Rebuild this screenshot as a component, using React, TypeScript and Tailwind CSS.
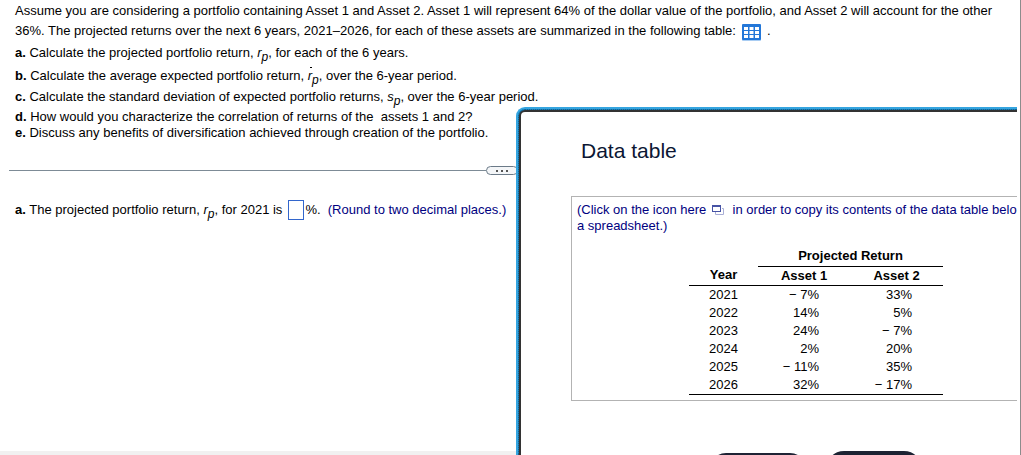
import type { ReactNode } from "react";

const rows = [
  { year: 2021, first: "− 7%", second: "33%" },
  { year: 2022, first: "14%", second: "5%" },
  { year: 2023, first: "24%", second: "− 7%" },
  { year: 2024, first: "2%", second: "20%" },
  { year: 2025, first: "− 11%", second: "35%" },
  { year: 2026, first: "32%", second: "− 17%" },
];

function Variable({ name, mean = false }: { name: string; mean?: boolean }) {
  return (
    <span className="relative italic">
      {name}
      <span className="relative top-1 text-[12px] leading-none">p</span>
      {mean && <span aria-hidden="true" className="absolute top-[-1px] left-[2px] h-px w-[2px] bg-black" />}
    </span>
  );
}

function Part({ letter, children }: { letter: string; children: ReactNode }) {
  return (
    <>
      <b>{letter}.</b> {children}
    </>
  );
}

function TableIcon() {
  return (
    <svg width="19" height="17" viewBox="0 0 19 17" aria-hidden="true">
      <rect y="1" width="19" height="16" rx="1" fill="#a9cdf3" />
      <rect width="19" height="16" rx="1" fill="#2377d8" />
      <path
        d="M2 3h4v3H2zM7.500 3h4v3h-4zM13 3h4v3h-4zM2 7h4v3H2zM7.500 7h4v3h-4zM13 7h4v3h-4zM2 11h4v3H2zM7.500 11h4v3h-4zM13 11h4v3h-4z"
        fill="#fff"
      />
    </svg>
  );
}

function CopyIcon() {
  return (
    <svg width="12" height="10" viewBox="0 0 12 10" aria-hidden="true">
      <path d="M10 3.500h1.500v6h-8V7" fill="none" stroke="#a9aed6" />
      <rect x=".5" y=".5" width="8" height="6" fill="#fff" stroke="#4753a5" />
      <path d="M0 1h9" stroke="#4753a5" strokeWidth="2" />
    </svg>
  );
}

function ReturnsTable() {
  return (
    <table className="mt-3 ml-[112px] w-[254px] table-fixed border-collapse leading-[18px]">
      <colgroup>
        <col className="w-[69px]" />
        <col className="w-[92px]" />
        <col className="w-[93px]" />
      </colgroup>
      <thead>
        <tr className="h-5">
          <td className="p-0" />
          <th colSpan={2} scope="colgroup" className="border-b border-black p-0 text-center">
            Projected Return
          </th>
        </tr>
        <tr className="border-b border-black">
          <th scope="col" className="p-0 text-center">Year</th>
          <th scope="col" className="p-0 text-center">Asset 1</th>
          <th scope="col" className="p-0 text-center">Asset 2</th>
        </tr>
      </thead>
      <tbody className="border-b border-black">
        {rows.map((row) => (
          <tr key={row.year}>
            <td className="p-0 text-center">{row.year}</td>
            <td className="p-0 pr-[31px] text-right whitespace-nowrap">{row.first}</td>
            <td className="p-0 pr-[31px] text-right whitespace-nowrap">{row.second}</td>
          </tr>
        ))}
      </tbody>
    </table>
  );
}

function DataDialog() {
  return (
    <section
      role="dialog"
      aria-labelledby="dialog-title"
      className="absolute top-[107px] right-0 bottom-0 left-[516px] overflow-hidden rounded-tl-[9px] border-t-2 border-l-2 border-[#35a5e0] bg-[#0f84c4]"
    >
      <div className="h-full rounded-tl-[7px] border-t border-l border-dotted border-[#1d5f86]">
        <div className="flex h-full flex-col rounded-tl-[6px] border-t-2 border-l-2 border-[#333] bg-white pl-[50px]">
          <h2 id="dialog-title" className="pt-[25px] pl-[10px] text-[21px] leading-7 text-[#0b1633]">
            Data table
          </h2>
          <div className="mt-[31px] h-[205px] shrink-0 border border-r-0 border-[#b3b3b3] pt-[5px] pl-[5px]">
            <p className="leading-4 whitespace-nowrap text-[#000080]">
              (Click on the icon here{" "}
              <button type="button" aria-label="Copy table" className="mr-[5px] ml-[2px] inline-block align-[-1px]">
                <CopyIcon />
              </button>{" "}
              in order to copy its contents of the data table belo
              <br />a spreadsheet.)
            </p>
            <ReturnsTable />
          </div>
          <div className="mt-[50px] flex shrink-0 items-center gap-5 pl-[139px]">
            <button type="button" aria-label="Print" className="h-8 w-[96px] rounded-full bg-[#1f2335]" />
            <button type="button" aria-label="Done" className="h-9 w-[96px] rounded-full bg-[#1c2333]" />
          </div>
        </div>
      </div>
    </section>
  );
}

export default function App() {
  return (
    <div className="h-screen overflow-hidden border-r border-[#8c8c8c] bg-white pr-[3px] font-['Liberation_Sans',Arial,sans-serif] text-[13px] text-black">
      <main className="relative flex h-full flex-col overflow-hidden">
        <div className="pt-px pl-[15px] whitespace-nowrap">
          <p className="leading-5">
            Assume you are considering a portfolio containing Asset 1 and Asset 2. Asset 1 will represent 64% of the
            dollar value of the portfolio, and Asset 2 will account for the other
          </p>
          <p className="flex h-5 items-center leading-5">
            36%. The projected returns over the next 6 years, 2021–2026, for each of these assets are summarized in the
            following table:
            <button type="button" aria-label="Open data table" className="mx-[6px] mt-[2px]">
              <TableIcon />
            </button>
            .
          </p>
          <p className="h-6 leading-6">
            <Part letter="a">
              Calculate the projected portfolio return, <Variable name="r" />, for each of the 6 years.
            </Part>
          </p>
          <p className="h-[21px] leading-[21px]">
            <Part letter="b">
              Calculate the average expected portfolio return, <Variable name="r" mean />, over the 6-year period.
            </Part>
          </p>
          <p className="h-[22px] leading-[22px]">
            <Part letter="c">
              Calculate the standard deviation of expected portfolio returns, <Variable name="s" />, over the 6-year
              period.
            </Part>
          </p>
          <p className="h-[17px] leading-[17px]">
            <Part letter="d">How would you characterize the correlation of returns of the &nbsp;assets 1 and 2?</Part>
          </p>
          <p className="h-4 leading-4">
            <Part letter="e">Discuss any benefits of diversification achieved through creation of the portfolio.</Part>
          </p>
        </div>

        <div className="mt-[25px] flex items-center pr-[22px] pl-[9px]">
          <span className="h-px flex-1 bg-[#7d8b96]" />
          <button
            type="button"
            aria-label="Resize question"
            className="flex h-[9px] w-8 items-center justify-center gap-[3px] rounded-full border border-[#6b7a88] bg-[#f4f6f8]"
          >
            <span className="size-[2px] bg-[#555]" />
            <span className="size-[2px] bg-[#555]" />
            <span className="size-[2px] bg-[#555]" />
          </button>
          <span className="h-px flex-1 bg-[#7d8b96]" />
        </div>

        <div className="mt-[25px] flex h-5 items-center pl-[15px] leading-5 whitespace-nowrap">
          <label htmlFor="answer">
            <Part letter="a">
              The projected portfolio return, <Variable name="r" />, for 2021 is
            </Part>
          </label>
          <input id="answer" type="text" className="mr-px ml-[6px] h-5 w-4 border border-[#3366cc] bg-white outline-none" />
          <span>
            %. &nbsp;<span className="text-[#000080]">(Round to two decimal places.)</span>
          </span>
        </div>

        <div className="mt-auto h-1 shrink-0 bg-[#f1f1f1]" />
        <DataDialog />
      </main>
    </div>
  );
}
